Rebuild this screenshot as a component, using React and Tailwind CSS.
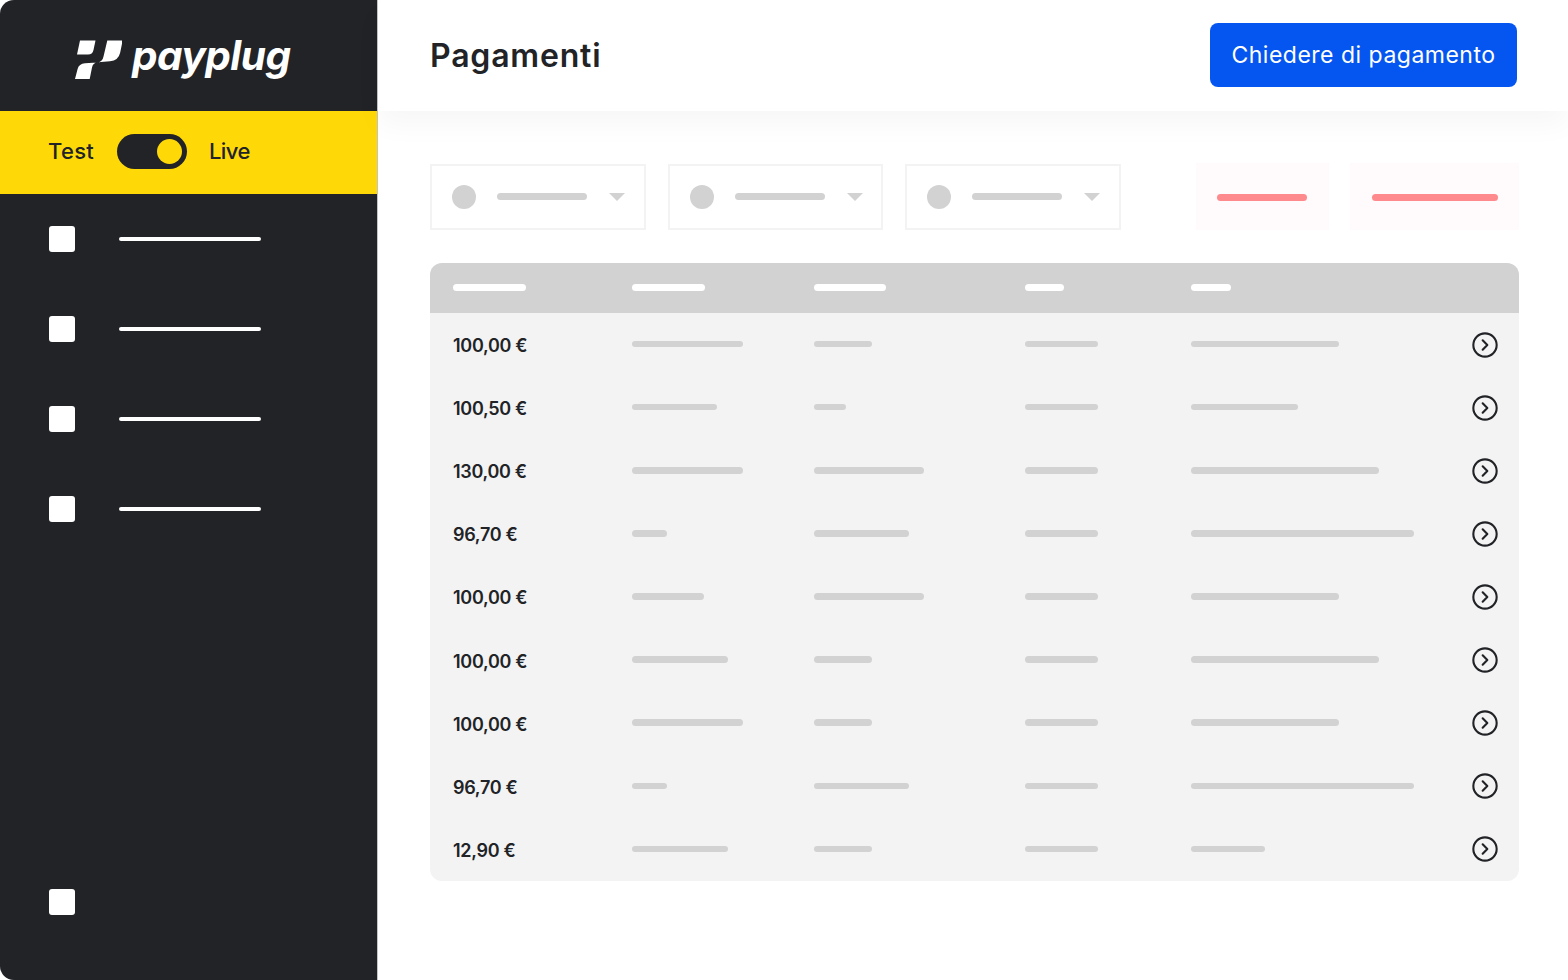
import React from 'react';
import { CircleChevronRight } from 'lucide-react';

const menu = [1, 2, 3, 4];

const rows = [
  { amount: '100,00 €', bars: [111, 58, 73, 148] },
  { amount: '100,50 €', bars: [85, 32, 73, 107] },
  { amount: '130,00 €', bars: [111, 110, 73, 188] },
  { amount: '96,70 €', bars: [35, 95, 73, 223] },
  { amount: '100,00 €', bars: [72, 110, 73, 148] },
  { amount: '100,00 €', bars: [96, 58, 73, 188] },
  { amount: '100,00 €', bars: [111, 58, 73, 148] },
  { amount: '96,70 €', bars: [35, 95, 73, 223] },
  { amount: '12,90 €', bars: [96, 58, 73, 74] },
];

const headerBars = [72.5, 72.5, 72.5, 39.5, 39.5];

const tableCols = 'grid grid-cols-[179px_181.5px_211px_166.5px_1fr_24px] items-center pl-[23px] pr-[22px]';

const LogoMark = () => (
  <svg width="48" height="40" viewBox="74 39.5 48 40" fill="#fff" className="mt-[12px]">
    <path d="M80 40 H95.5 L93.5 49.5 Q92.5 54 88 54 H77 Z" />
    <path d="M107.3 40 H122.7 L120.2 52 Q118.5 60 110 60.8 L98 61.8 Q93 62.3 92 67 L89.7 78.5 H75 L77.6 68.5 Q79 63.2 85 62.8 L97 62 Q102.5 61.5 103.5 56 Z" />
  </svg>
);

const Filter = () => (
  <div className="flex h-[66px] w-[215.5px] items-center border-2 border-[#f3f3f3] pl-[20px]">
    <div className="h-6 w-6 rounded-full bg-[#d2d2d2]" />
    <div className="ml-[21px] h-[7px] w-[90px] rounded-full bg-[#d2d2d2]" />
    <div className="ml-[22px] h-0 w-0 border-x-[8px] border-t-[8px] border-x-transparent border-t-[#d2d2d2]" />
  </div>
);

const RedButton = ({ width, bar }) => (
  <div className="flex h-[67px] items-center justify-center bg-[#fffafb]" style={{ width }}>
    <div className="mt-[1px] h-[7px] rounded-full bg-[#ff8a8e]" style={{ width: bar }} />
  </div>
);

export default function App() {
  return (
    <div className="flex h-[980px] w-[1568px] overflow-hidden bg-white font-['Inter','Noto_Sans',sans-serif] text-[#212327]">
      {/* Sidebar */}
      <aside className="flex w-[378px] shrink-0 flex-col rounded-l-[14px] border-r border-[#c4c4c4] bg-[#212327]">
        <div className="flex h-[111px] items-center pb-[3px] pl-[74px]">
          <LogoMark />
          <span className="mt-[5px] ml-[10px] font-['Inter',sans-serif] text-[40.5px] leading-none font-bold tracking-[-0.5px] text-white italic">payplug</span>
        </div>
        <div className="flex h-[83px] items-center bg-[#ffd907] pb-[2px] pl-[48px]">
          <span className="-mt-[1px] w-[69px] text-[22px] font-medium tracking-[0.3px]">Test</span>
          <div className="flex h-[35px] w-[70px] items-center justify-end rounded-full bg-[#212327] pr-[5px]">
            <div className="h-[25px] w-[25px] rounded-full bg-[#ffd907]" />
          </div>
          <span className="-mt-[1px] ml-[22px] text-[22px] font-medium tracking-[-0.6px]">Live</span>
        </div>
        <nav className="flex flex-col gap-[64px] pt-[32px] pl-[49px]">
          {menu.map((item) => (
            <div key={item} className="flex h-[26px] items-center gap-[44px]">
              <div className="h-[26px] w-[26px] rounded-[3px] bg-white" />
              <div className="h-[4px] w-[142px] rounded-full bg-white" />
            </div>
          ))}
        </nav>
        <div className="mt-auto mb-[65px] ml-[49px] h-[26px] w-[26px] rounded-[3px] bg-white" />
      </aside>

      {/* Main */}
      <main className="flex min-w-0 flex-1 flex-col">
        <header className="flex h-[111px] items-center justify-between pr-[51px] pl-[52px] shadow-[0_14px_26px_rgba(0,0,0,0.035)]">
          <h1 className="text-[32px] font-semibold tracking-[0.8px]">Pagamenti</h1>
          <button className="mb-[1px] flex h-[64px] w-[307px] items-center justify-center rounded-[8px] bg-[#0556f0] text-[23px] tracking-[0.5px] text-white">
            Chiedere di pagamento
          </button>
        </header>

        <div className="flex flex-col pt-[52px] pr-[49px] pl-[52px]">
          <div className="flex h-[67px] items-center">
            <div className="flex gap-[22px]">
              <Filter />
              <Filter />
              <Filter />
            </div>
            <div className="ml-auto flex gap-[21px]">
              <RedButton width={133.5} bar={90} />
              <RedButton width={169} bar={126} />
            </div>
          </div>

          <div className="mt-[33px] overflow-hidden rounded-[12px] bg-[#f3f3f3]">
            <div className={`${tableCols} h-[50px] bg-[#d2d2d2]`}>
              {headerBars.map((width, i) => (
                <div key={i} className="mb-[1px] h-[7px] rounded-full bg-white" style={{ width }} />
              ))}
            </div>
            {rows.map((row, i) => (
              <div key={i} className={`${tableCols} h-[63.11px]`}>
                <span className="mt-[2px] text-[18px] font-semibold tracking-[-0.3px]">{row.amount}</span>
                {row.bars.map((width, j) => (
                  <div key={j} className="mb-[1px] h-[6.5px] rounded-full bg-[#d2d2d2]" style={{ width }} />
                ))}
                <CircleChevronRight size={28} strokeWidth={1.8} className="-ml-[2px]" />
              </div>
            ))}
          </div>
        </div>
      </main>
    </div>
  );
}
